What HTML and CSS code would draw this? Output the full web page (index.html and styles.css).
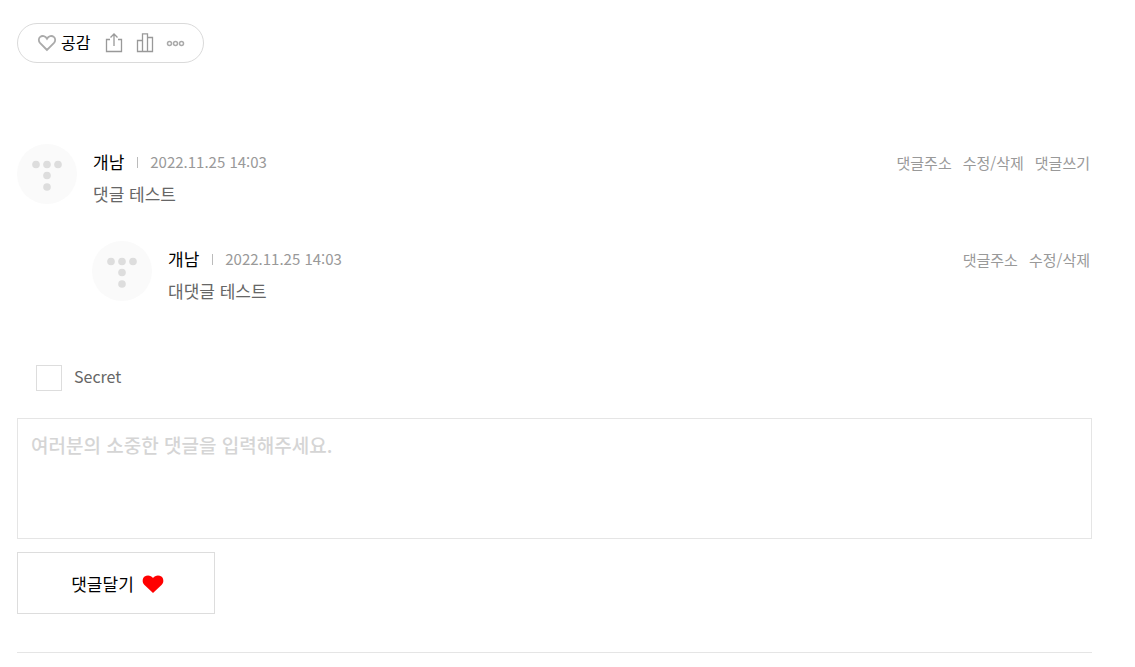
FILE: index.html
```
<!DOCTYPE html>
<html lang="ko">
<head>
    <meta charset="UTF-8">
    <meta name="viewport" content="width=device-width, initial-scale=1.0">
    <title>댓글</title>
    <link rel="stylesheet" href="styles.css">
</head>
<body>
    <div class="area_view">
        <div class="post_btn">
            <button type="button" class="btn_like">
                <svg width="20" height="20" viewBox="0 0 20 20"><path d="M10 17 L3.2 10.2 C1.2 8.1 1.5 5.2 3.2 3.9 C5.2 2.3 8.4 2.8 10 5.7 C11.6 2.8 14.8 2.3 16.8 3.9 C18.5 5.2 18.8 8.1 16.8 10.2 Z"/></svg>
                <span>공감</span>
            </button>
            <button type="button" aria-label="공유하기">
                <svg width="20" height="20" viewBox="0 0 20 20"><path d="M6 6.5H2.5V18.5H17.5V6.5H14M10 13V1M6.5 4.5L10 1L13.5 4.5"/></svg>
            </button>
            <button type="button" aria-label="통계">
                <svg width="20" height="20" viewBox="0 0 20 20"><path d="M7.5 18.5H2.5V7.5H7.5M12.5 4.5H17.5V18.5H12.5M7.5 .8H12.5V18.5H7.5Z"/></svg>
            </button>
            <button type="button" aria-label="더보기">
                <svg width="20" height="20" viewBox="0 0 20 20" class="ico_more"><circle cx="3.5" cy="10.5" r="2"/><circle cx="9.5" cy="10.5" r="2"/><circle cx="15.5" cy="10.5" r="2"/></svg>
            </button>
        </div>

        <ul class="list_reply">
            <li>
                <svg class="thumb" width="60" height="60" viewBox="0 0 60 60"><circle class="bg" cx="30" cy="30" r="30"/><circle cx="19" cy="20.5" r="3.8"/><circle cx="30" cy="20.5" r="3.8"/><circle cx="41" cy="20.5" r="3.8"/><circle cx="30" cy="31.5" r="3.8"/><circle cx="30" cy="43" r="3.8"/></svg>
                <div class="cont">
                    <div class="info"><strong>개남</strong><span class="date">2022.11.25 14:03</span></div>
                    <p>댓글 테스트</p>
                </div>
                <div class="links">
                    <a href="#">댓글주소</a>
                    <a href="#">수정/삭제</a>
                    <a href="#">댓글쓰기</a>
                </div>
            </li>
            <li class="re">
                <svg class="thumb" width="60" height="60" viewBox="0 0 60 60"><circle class="bg" cx="30" cy="30" r="30"/><circle cx="19" cy="20.5" r="3.8"/><circle cx="30" cy="20.5" r="3.8"/><circle cx="41" cy="20.5" r="3.8"/><circle cx="30" cy="31.5" r="3.8"/><circle cx="30" cy="43" r="3.8"/></svg>
                <div class="cont">
                    <div class="info"><strong>개남</strong><span class="date">2022.11.25 14:03</span></div>
                    <p>대댓글 테스트</p>
                </div>
                <div class="links">
                    <a href="#">댓글주소</a>
                    <a href="#">수정/삭제</a>
                </div>
            </li>
        </ul>

        <form class="reply_write">
            <div class="secret">
                <input type="checkbox" id="secret">
                <label for="secret">Secret</label>
            </div>
            <textarea aria-label="댓글" placeholder="여러분의 소중한 댓글을 입력해주세요."></textarea>
            <button type="submit" class="btn_submit">
                댓글달기
                <svg width="22" height="20" viewBox="0 0 22 20"><path d="M11 19 L2.5 11 C-0.2 8.3 0.3 4.2 2.6 2.5 C5.2 0.6 9.2 1.2 11 4 C12.8 1.2 16.8 0.6 19.4 2.5 C21.7 4.2 22.2 8.3 19.5 11 Z"/></svg>
            </button>
        </form>
    </div>
</body>
</html>
```
FILE: styles.css
```
*{box-sizing: border-box;}
body,ul,p{margin: 0;padding: 0;}
li{list-style: none;}
a{color: inherit;text-decoration: none;}
body{
    background: #fff;
    color: #000;
    font-family: "Noto Sans CJK KR", sans-serif;
}
button,textarea{
    font-family: inherit;
}
.area_view{
    margin: 0 43px 0 17px;
    padding-top: 23px;
}

/* 공감 버튼 */
.post_btn{
    display: inline-flex;
    align-items: center;
    gap: 11px;
    height: 40px;
    padding: 0 17px 0 19px;
    border: 1px solid #dadada;
    border-radius: 20px;
}
.post_btn button{
    display: flex;
    align-items: center;
    gap: 4px;
    padding: 0;
    border: 0;
    background: none;
    color: #000;
    font-size: 16px;
    line-height: 24px;
}
.btn_like{
    margin-right: 3px;
}
.btn_like span{
    padding-bottom: 2px;
}
.post_btn svg{
    fill: none;
    stroke: #999;
    stroke-width: 1.3;
}
.post_btn .btn_like svg{
    stroke: #aaa;
    stroke-width: 1.8;
}
.post_btn .ico_more{
    stroke: #aaa;
    stroke-width: 1.5;
}

/* 댓글 목록 */
.list_reply{
    margin-top: 81px;
}
.list_reply li{
    display: flex;
    min-height: 60px;
    margin-bottom: 34px;
}
.list_reply .re{
    margin-left: 75px;
}
.thumb{
    flex: none;
    margin-right: 16px;
    fill: #ddd;
}
.thumb .bg{
    fill: #fafafa;
}
.cont{
    flex: 1;
    padding-top: 5px;
}
.info{
    display: flex;
    align-items: center;
    line-height: 26px;
}
.info strong{
    font-size: 17px;
    font-weight: 400;
}
.date{
    display: flex;
    align-items: center;
    color: #999;
    font-size: 15px;
}
.date::before{
    content: "";
    width: 1px;
    height: 11px;
    margin: 0 12px 0 13px;
    background: #bbb;
}
.cont p{
    margin-top: 6px;
    color: #666;
    font-size: 17px;
    line-height: 26px;
}
.links{
    display: flex;
    gap: 11px;
    padding: 8px 2px 0 0;
    color: #999;
    font-size: 15px;
    line-height: 22px;
}

/* 댓글 쓰기 */
.reply_write{
    padding-bottom: 38px;
    border-bottom: 1px solid #e5e5e5;
}
.secret{
    display: flex;
    align-items: flex-start;
    gap: 12px;
    margin: 61px 0 27px 19px;
}
.secret input{
    appearance: none;
    width: 26px;
    height: 26px;
    margin: 0;
    border: 1px solid #ddd;
    background: #fff;
}
.secret label{
    color: #666;
    font-size: 16px;
    line-height: 22px;
}
.reply_write textarea{
    display: block;
    width: 100%;
    height: 121px;
    padding: 12px 13px;
    border: 1px solid #e5e5e5;
    color: #333;
    font-size: 19px;
    line-height: 28px;
    resize: none;
}
.reply_write textarea::placeholder{
    color: #d5d5d5;
    font-weight: 500;
}
.btn_submit{
    display: flex;
    align-items: center;
    justify-content: center;
    gap: 8px;
    width: 198px;
    height: 62px;
    margin-top: 13px;
    padding: 0 5px 0 8px;
    border: 1px solid #ddd;
    background: #fff;
    color: #000;
    font-size: 17px;
}
.btn_submit svg{
    margin-top: 2px;
    fill: #f00;
}
```
